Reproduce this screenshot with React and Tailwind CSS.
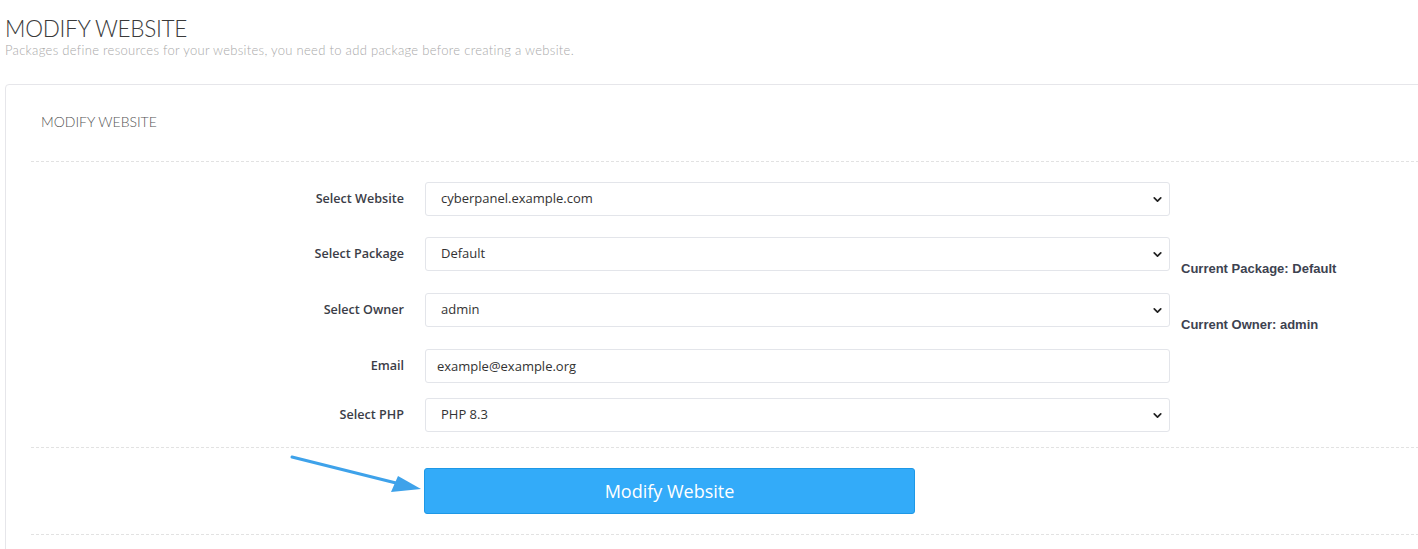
import React from "react";
import { ChevronDown } from "lucide-react";

const rows = [
  { label: "Select Website", value: "cyberpanel.example.com", type: "select", mt: "mt-[20px]" },
  { label: "Select Package", value: "Default", type: "select", mt: "mt-[21px]", side: "Current Package: Default" },
  { label: "Select Owner", value: "admin", type: "select", mt: "mt-[17px]", side: "Current Owner: admin" },
  { label: "Email", value: "example@example.org", type: "input", mt: "mt-[17px]" },
  { label: "Select PHP", value: "PHP 8.3", type: "select", mt: "mt-[15px]" },
];

function Field({ row }) {
  if (row.type === "input") {
    return (
      <input
        readOnly
        value={row.value}
        className="w-[745px] h-[34px] border border-[#e3e5ea] rounded-[3px] px-[11px] text-[13px] text-[#333] outline-none"
        style={{ fontFamily: "'Open Sans', sans-serif" }}
      />
    );
  }
  return (
    <div className="relative w-[745px] h-[34px]">
      <select
        defaultValue={row.value}
        className="appearance-none w-full h-full border border-[#e3e5ea] rounded-[3px] pl-[15px] text-[13px] text-[#333] bg-white outline-none"
        style={{ fontFamily: "'Open Sans', sans-serif" }}
      >
        <option>{row.value}</option>
      </select>
      <ChevronDown
        size={13}
        strokeWidth={3.2}
        className="absolute right-[6px] top-[11px] text-[#222] pointer-events-none"
      />
    </div>
  );
}

export default function App() {
  return (
    <div className="relative min-h-screen bg-white overflow-hidden pl-[5px] pt-[15px]">
      {/* ================= PAGE TITLE ================= */}
      <h1 className="text-[22.5px] leading-[27px] font-light text-[#3a3a3a] tracking-[-0.3px] [font-family:Lato,sans-serif]">
        MODIFY WEBSITE
      </h1>
      <p className="text-[13px] leading-[16px] text-[#a9a9a9] tracking-[0.3px] [font-family:Lato,sans-serif] font-light">
        Packages define resources for your websites, you need to add package before creating a website.
      </p>

      {/* ================= PANEL ================= */}
      <div className="mt-[26px] w-[1440px] border border-[#e6e6ea] rounded-[4px] pl-[25px] pb-[20px]">
        <h2 className="pl-[10px] pt-[27px] pb-[29px] text-[14px] leading-[20px] text-[#555] [font-family:Lato,sans-serif] font-light">
          MODIFY WEBSITE
        </h2>
        <div className="border-t border-dashed border-[#e2e2e2]" />

        {rows.map((row) => (
          <div key={row.label} className={`flex items-start ${row.mt}`}>
            <label
              className="w-[373px] h-[34px] flex items-center justify-end text-[12.6px] font-semibold text-[#3b3d47]"
              style={{ fontFamily: "'Open Sans', sans-serif" }}
            >
              {row.label}
            </label>
            <div className="ml-[21px]">
              <Field row={row} />
            </div>
            {row.side && (
              <span className="ml-[11px] mt-[24px] text-[13px] leading-[15px] font-bold text-[#3d4250] [font-family:'Liberation_Sans',Arial,sans-serif]">
                {row.side}
              </span>
            )}
          </div>
        ))}

        <div className="mt-[15px] border-t border-dashed border-[#e2e2e2]" />

        <div className="pl-[393px] pt-[20px]">
          <button
            className="w-[491px] h-[46px] bg-[#33abf9] border border-[#1e98e6] rounded-[3px] text-white text-[18px]"
            style={{ fontFamily: "'Open Sans', sans-serif" }}
          >
            Modify Website
          </button>
        </div>

        <div className="mt-[20px] border-t border-dashed border-[#e2e2e2]" />
      </div>

      {/* arrow pointing at the button */}
      <svg
        className="absolute left-[288px] top-[451px] pointer-events-none"
        width="140"
        height="46"
        viewBox="0 0 140 46"
      >
        <line x1="4" y1="6" x2="112" y2="33" stroke="#3ea2ea" strokeWidth="3" strokeLinecap="round" />
        <polygon points="133,38 103,41 110,25" fill="#3ea2ea" />
      </svg>
    </div>
  );
}
